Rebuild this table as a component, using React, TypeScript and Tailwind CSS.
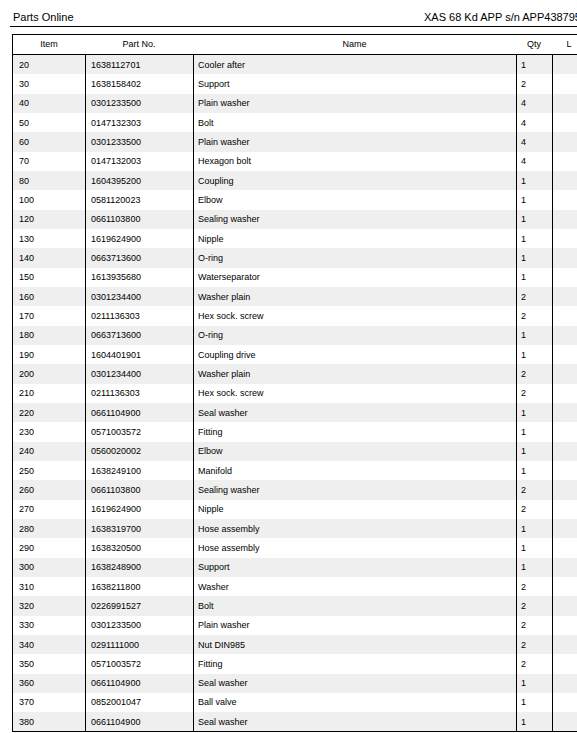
import React from 'react';

const rows: [string, string, string, string][] = [
  ['20', '1638112701', 'Cooler after', '1'],
  ['30', '1638158402', 'Support', '2'],
  ['40', '0301233500', 'Plain washer', '4'],
  ['50', '0147132303', 'Bolt', '4'],
  ['60', '0301233500', 'Plain washer', '4'],
  ['70', '0147132003', 'Hexagon bolt', '4'],
  ['80', '1604395200', 'Coupling', '1'],
  ['100', '0581120023', 'Elbow', '1'],
  ['120', '0661103800', 'Sealing washer', '1'],
  ['130', '1619624900', 'Nipple', '1'],
  ['140', '0663713600', 'O-ring', '1'],
  ['150', '1613935680', 'Waterseparator', '1'],
  ['160', '0301234400', 'Washer plain', '2'],
  ['170', '0211136303', 'Hex sock. screw', '2'],
  ['180', '0663713600', 'O-ring', '1'],
  ['190', '1604401901', 'Coupling drive', '1'],
  ['200', '0301234400', 'Washer plain', '2'],
  ['210', '0211136303', 'Hex sock. screw', '2'],
  ['220', '0661104900', 'Seal washer', '1'],
  ['230', '0571003572', 'Fitting', '1'],
  ['240', '0560020002', 'Elbow', '1'],
  ['250', '1638249100', 'Manifold', '1'],
  ['260', '0661103800', 'Sealing washer', '2'],
  ['270', '1619624900', 'Nipple', '2'],
  ['280', '1638319700', 'Hose assembly', '1'],
  ['290', '1638320500', 'Hose assembly', '1'],
  ['300', '1638248900', 'Support', '1'],
  ['310', '1638211800', 'Washer', '2'],
  ['320', '0226991527', 'Bolt', '2'],
  ['330', '0301233500', 'Plain washer', '2'],
  ['340', '0291111000', 'Nut DIN985', '2'],
  ['350', '0571003572', 'Fitting', '2'],
  ['360', '0661104900', 'Seal washer', '1'],
  ['370', '0852001047', 'Ball valve', '1'],
  ['380', '0661104900', 'Seal washer', '1'],
];

const cols = 'grid grid-cols-[72px_108px_323px_36px_34px]';

const App: React.FC = () => {
  return (
    <div className="w-[577px] h-[733px] overflow-hidden bg-white text-black font-['Liberation_Sans',Arial,sans-serif]">
      <div className="w-[600px]">
        {/* page header */}
        <div className="ml-[10px] h-[27px] flex items-end border-b border-black text-[11px] leading-none pb-[3px]">
          <span className="pl-[3px] w-[414px] shrink-0">Parts Online</span>
          <span className="whitespace-nowrap">XAS 68 Kd APP s/n APP438795</span>
        </div>

        <div className="ml-[12px] mt-[7px] w-[574px] border border-black text-[9px] leading-none">
          <div className={`${cols} h-[20px] items-center border-b border-black`}>
            <div className="text-center">Item</div>
            <div className="text-center">Part No.</div>
            <div className="text-center">Name</div>
            <div className="text-center">Qty</div>
            <div className="text-center">L</div>
          </div>

          {rows.map((r, i) => (
            <div
              key={i}
              className={`${cols} h-[19.34px] ${i % 2 === 0 ? 'bg-[#efefef]' : 'bg-white'}`}
            >
              <div className="flex items-center pl-[6px] pt-[1px]">{r[0]}</div>
              <div className="flex items-center pl-[5px] pt-[1px] border-l border-black">{r[1]}</div>
              <div className="flex items-center pl-[4px] pt-[1px] border-l border-black">{r[2]}</div>
              <div className="flex items-center pl-[4px] pt-[1px] border-l border-black">{r[3]}</div>
              <div className="border-l border-black"></div>
            </div>
          ))}
        </div>
      </div>
    </div>
  );
};

export default App;
